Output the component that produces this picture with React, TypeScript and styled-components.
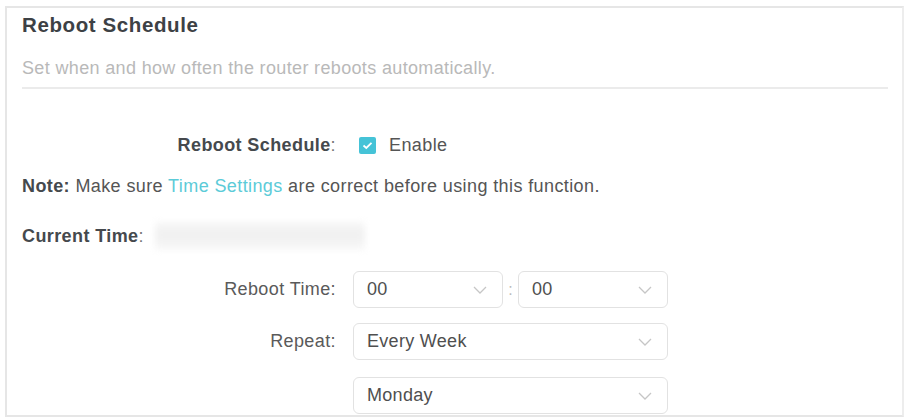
import React from "react";
import styled, { createGlobalStyle } from "styled-components";

const GlobalStyle = createGlobalStyle`
  html, body {
    margin: 0;
    padding: 0;
    background: #ffffff;
  }
  body {
    font-family: "Liberation Sans", Arial, sans-serif;
    color: #555;
  }
`;

const Panel = styled.section`
  box-sizing: border-box;
  margin: 6px 0 0 5px;
  width: 899px;
  height: 411px;
  border: 2px solid #e6e6e6;
  border-right-color: #ededed;
  padding: 0 15px;
  overflow: hidden;
`;

const Header = styled.header`
  width: 866px;
  border-bottom: 2px solid #ebebeb;
  padding-top: 3px;
  padding-bottom: 8px;
`;

const Title = styled.h1`
  margin: 0;
  font-size: 20.5px;
  font-weight: 700;
  letter-spacing: 0.6px;
  line-height: 28px;
  color: #3d4145;
`;

const Subtitle = styled.p`
  margin: 18px 0 0;
  font-size: 18px;
  line-height: 22px;
  letter-spacing: 0.35px;
  color: #b9b9b9;
`;

const Form = styled.div`
  display: flex;
  flex-direction: column;
  padding-top: 46px;
`;

const FieldRow = styled.div<{ $mt?: number }>`
  display: grid;
  grid-template-columns: 314px 1fr;
  column-gap: 17px;
  align-items: center;
  margin-top: ${(p) => p.$mt ?? 0}px;
`;

const Label = styled.div<{ $bold?: boolean }>`
  text-align: right;
  font-size: 18px;
  letter-spacing: 0.4px;
  font-weight: ${(p) => (p.$bold ? 700 : 400)};
  color: ${(p) => (p.$bold ? "#45494d" : "#5a5a5a")};
`;

const Colon = styled.span`
  font-weight: 400;
  color: #777;
`;

const CheckWrap = styled.label`
  display: flex;
  align-items: center;
  gap: 13px;
  padding-left: 6px;
  font-size: 18px;
  letter-spacing: 0.4px;
  color: #555;
`;

const Box = styled.span`
  width: 17px;
  height: 17px;
  border-radius: 2px;
  background: #45c3d7;
  display: flex;
  align-items: center;
  justify-content: center;
`;

const Note = styled.p`
  margin: 19px 0 0;
  font-size: 18px;
  letter-spacing: 0.4px;
  line-height: 22px;
  color: #555;
`;

const Strong = styled.strong`
  color: #45494d;
`;

const Link = styled.a`
  color: #5ccbd8;
  text-decoration: none;
`;

const CurrentRow = styled.div`
  display: flex;
  align-items: center;
  margin-top: 25px;
  height: 28px;
`;

const CurrentLabel = styled.div`
  font-size: 18px;
  letter-spacing: 0.4px;
  font-weight: 700;
  color: #45494d;
  width: 133px;
`;

const Blurred = styled.div`
  width: 210px;
  height: 28px;
  background: linear-gradient(
    180deg,
    #f7f7f7 0%,
    #f0f0f0 45%,
    #f3f3f3 70%,
    #f9f9f9 100%
  );
  filter: blur(3px);
`;

const Controls = styled.div`
  display: flex;
  align-items: center;
`;

const Select = styled.div<{ $w: number }>`
  box-sizing: border-box;
  width: ${(p) => p.$w}px;
  height: 37px;
  border: 1.5px solid #e2e2e2;
  border-radius: 6px;
  display: flex;
  align-items: center;
  justify-content: space-between;
  padding: 0 15px 0 13px;
  font-size: 18px;
  letter-spacing: 0.3px;
  color: #4f4f4f;
`;

const TimeColon = styled.span`
  width: 15px;
  text-align: center;
  color: #bbb;
  font-size: 16px;
`;

const Chevron = () => (
  <svg width="14" height="8" viewBox="0 0 14 8" aria-hidden="true">
    <polyline
      points="1,1 7,7 13,1"
      fill="none"
      stroke="#c6c6c6"
      strokeWidth="1.3"
    />
  </svg>
);

const Dropdown = ({ value, w }: { value: string; w: number }) => (
  <Select $w={w}>
    <span>{value}</span>
    <Chevron />
  </Select>
);

export default function App() {
  return (
    <>
      <GlobalStyle />
      <Panel>
        <Header>
          <Title>Reboot Schedule</Title>
          <Subtitle>Set when and how often the router reboots automatically.</Subtitle>
        </Header>
        <Form>
          <FieldRow>
            <Label $bold>
              Reboot Schedule<Colon>:</Colon>
            </Label>
            <CheckWrap>
              <Box>
                <svg width="11" height="9" viewBox="0 0 11 9" aria-hidden="true">
                  <polyline
                    points="1.5,4.5 4.3,7 9.5,1.8"
                    fill="none"
                    stroke="#ffffff"
                    strokeWidth="1.8"
                  />
                </svg>
              </Box>
              Enable
            </CheckWrap>
          </FieldRow>
          <Note>
            <Strong>Note:</Strong> Make sure <Link>Time Settings</Link> are correct before using this function.
          </Note>
          <CurrentRow>
            <CurrentLabel>
              Current Time<Colon>:</Colon>
            </CurrentLabel>
            <Blurred />
          </CurrentRow>
          <FieldRow $mt={21}>
            <Label>Reboot Time:</Label>
            <Controls>
              <Dropdown value="00" w={150} />
              <TimeColon>:</TimeColon>
              <Dropdown value="00" w={150} />
            </Controls>
          </FieldRow>
          <FieldRow $mt={15}>
            <Label>Repeat:</Label>
            <Dropdown value="Every Week" w={315} />
          </FieldRow>
          <FieldRow $mt={17}>
            <Label />
            <Dropdown value="Monday" w={315} />
          </FieldRow>
        </Form>
      </Panel>
    </>
  );
}
